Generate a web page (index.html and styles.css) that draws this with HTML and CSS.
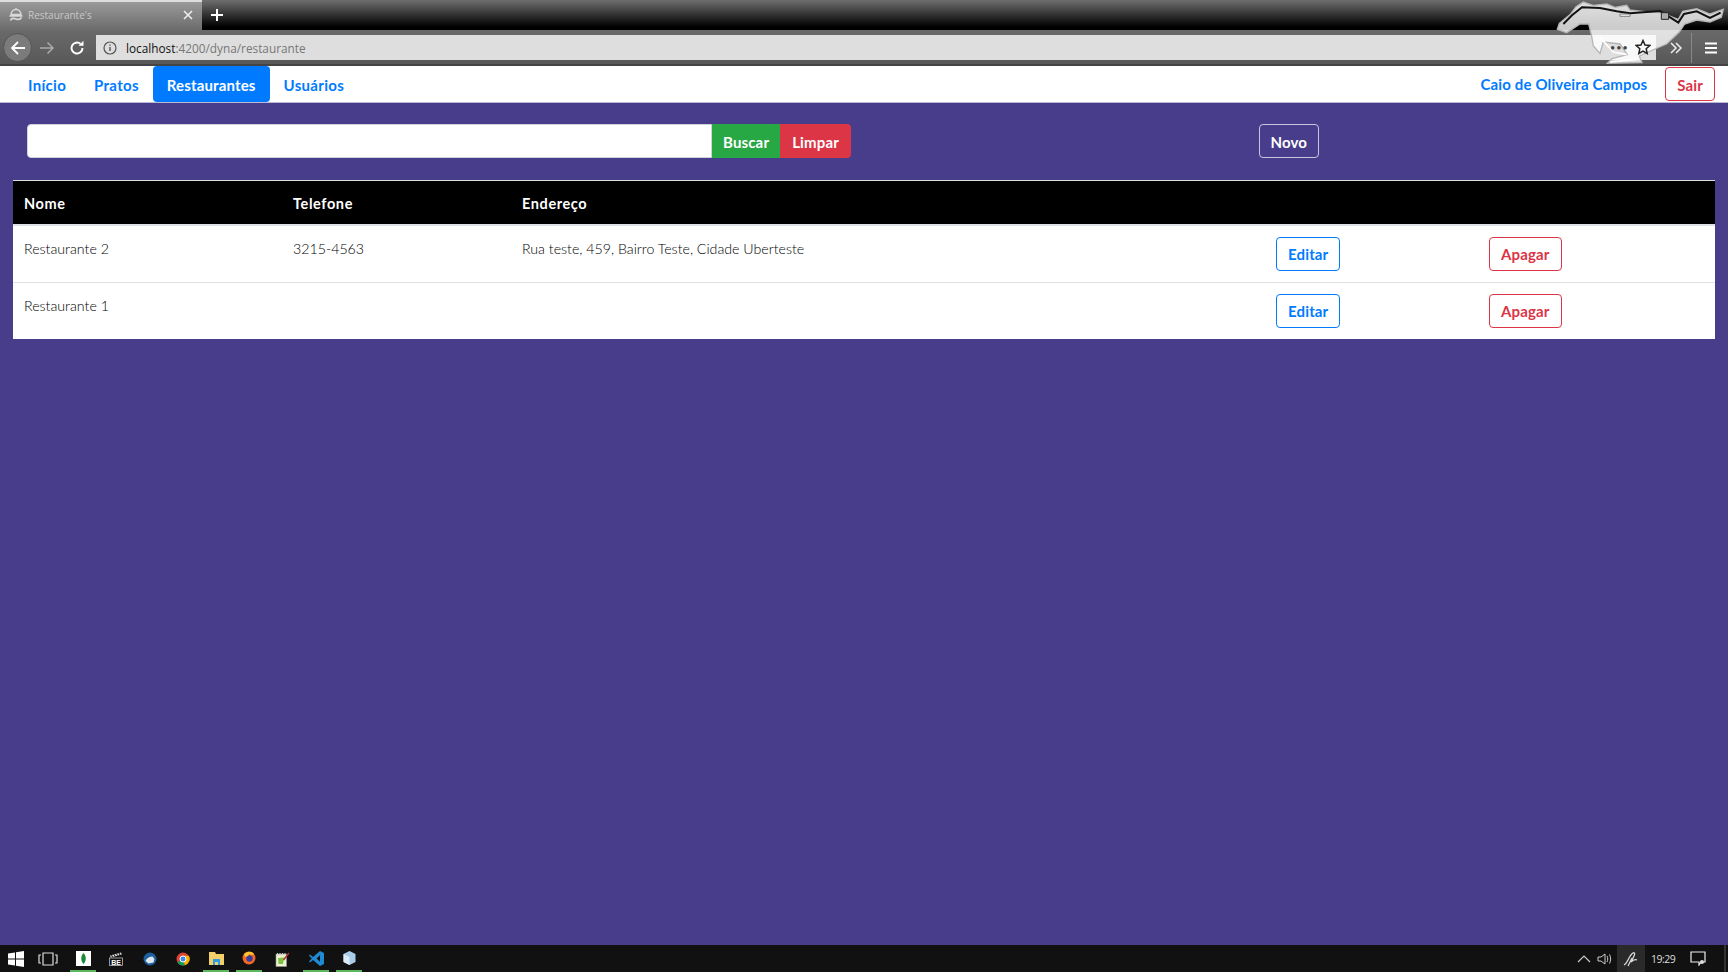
FILE: index.html
```html
<!doctype html>
<html lang="pt-BR">
<head>
<meta charset="UTF-8">
<title>Restaurante's</title>
<link rel="stylesheet" href="styles.css">
</head>
<body>
<div class="browser">
  <div class="tabstrip">
    <div class="tab">
      <svg class="tab-icon" width="16" height="16" viewBox="0 0 16 16"><path d="M8 1v1.500M3 7.500a5 5 0 0 1 10 0zM1.500 9h13" fill="none" stroke="#d8d8d8" stroke-width="1.300"/><path d="M2.500 13.500c1-2.500 3-2.500 5.500-1.500s4 1 5.500-1.500" fill="none" stroke="#d8d8d8" stroke-width="1.700"/></svg>
      <span class="tab-title">Restaurante's</span>
      <svg class="tab-close" width="12" height="12" viewBox="0 0 12 12"><path d="M2 2l8 8M10 2l-8 8" stroke="#eee" stroke-width="1.600"/></svg>
    </div>
    <svg class="new-tab" width="14" height="14" viewBox="0 0 14 14"><path d="M7 1v12M1 7h12" stroke="#fff" stroke-width="2"/></svg>
  </div>
  <div class="toolbar">
    <span class="back">
      <svg width="18" height="18" viewBox="0 0 18 18"><path d="M16 9H3M9 3L3 9l6 6" fill="none" stroke="#fff" stroke-width="1.800"/></svg>
    </span>
    <svg class="fwd" width="16" height="16" viewBox="0 0 16 16"><path d="M1 8h13M8.500 2.500L14 8l-5.500 5.500" fill="none" stroke="#aaa" stroke-width="1.500"/></svg>
    <svg class="reload" width="16" height="16" viewBox="0 0 16 16"><path d="M13.500 8A5.500 5.500 0 1 1 11.500 3.800" fill="none" stroke="#fff" stroke-width="2"/><path d="M9.500 5.800h5v-5z" fill="#fff"/></svg>
    <div class="urlbar">
      <svg width="16" height="16" viewBox="0 0 16 16"><circle cx="8" cy="8" r="6" fill="none" stroke="#555" stroke-width="1.200"/><path d="M8 7v4M8 4.500v1.300" stroke="#555" stroke-width="1.400"/></svg>
      <span class="url"><b>localhost</b>:4200/dyna/restaurante</span>
    </div>
    <svg class="more" width="14" height="14" viewBox="0 0 14 14"><path d="M2 2l5 5-5 5M7 2l5 5-5 5" fill="none" stroke="#eee" stroke-width="1.500"/></svg>
    <span class="tool-sep"></span>
    <svg class="menu" width="14" height="14" viewBox="0 0 14 14"><path d="M1 2.500h12M1 7h12M1 11.500h12" stroke="#fff" stroke-width="2"/></svg>
  </div>
  <svg class="mustang" width="178" height="68" viewBox="0 0 534 204">
    <path d="M22 88L28 70 62 42 78 20 100 6 130 16 170 12 195 22 230 16 240 30 290 36 332 38 385 58 398 34 440 26 480 42 520 28 514 52 480 66 440 60 404 72 388 96 350 132 308 150 268 168 276 188 172 190 186 176 232 164 210 132 160 126 150 160 130 138 124 104 116 72 90 72 50 98z" fill="#fff" fill-opacity=".8" stroke="#b5b5b5" stroke-width="4"/>
    <path d="M40 72L66 46 96 22 150 24 200 34 240 40 330 33 385 68 402 42 440 34 480 54 512 38" fill="none" stroke="#111" stroke-width="6"/>
    <path d="M210 42h30v7h-30z" fill="#eee" stroke="#555" stroke-width="2"/>
    <path d="M334 38h22v20h-22z" fill="#aaa" stroke="#222" stroke-width="3"/>
    <path d="M150 112l40 44 40 8M180 186l80-8" fill="none" stroke="#fff" stroke-width="5"/>
  </svg>
  <div class="url-actions">
    <span class="url-dots">•••</span>
    <svg width="16" height="16" viewBox="0 0 16 16"><path d="M8 1.500l2 4.500 4.800.5-3.600 3.200 1 4.800L8 12.100l-4.200 2.400 1-4.800L1.200 6.500 6 6z" fill="none" stroke="#222" stroke-width="1.500"/></svg>
  </div>
</div>

<nav class="navbar">
  <a class="nav-link" href="#">Início</a>
  <a class="nav-link" href="#">Pratos</a>
  <a class="nav-link active" href="#">Restaurantes</a>
  <a class="nav-link" href="#">Usuários</a>
  <span class="nav-user">Caio de Oliveira Campos</span>
  <button class="btn btn-red btn-sair">Sair</button>
</nav>

<main class="content">
  <div class="search-row">
    <input class="search-input" type="text">
    <button class="btn-fill green">Buscar</button>
    <button class="btn-fill red">Limpar</button>
    <button class="btn btn-novo">Novo</button>
  </div>
  <table class="grid">
    <thead>
      <tr><th class="c-nome">Nome</th><th class="c-tel">Telefone</th><th class="c-end">Endereço</th><th class="c-ed"></th><th></th></tr>
    </thead>
    <tbody>
      <tr>
        <td>Restaurante 2</td><td>3215-4563</td><td>Rua teste, 459, Bairro Teste, Cidade Uberteste</td>
        <td class="acao"><button class="btn btn-blue">Editar</button></td>
        <td class="acao"><button class="btn btn-red">Apagar</button></td>
      </tr>
      <tr>
        <td>Restaurante 1</td><td></td><td></td>
        <td class="acao"><button class="btn btn-blue">Editar</button></td>
        <td class="acao"><button class="btn btn-red">Apagar</button></td>
      </tr>
    </tbody>
  </table>
</main>

<footer class="taskbar">
  <svg class="win" width="16" height="16" viewBox="0 0 16 16"><path d="M0 2.500l7-1v6H0zM8 1.300l8-1.300v7.500H8zM0 8.500h7v6l-7-1zM8 8.500h8V16l-8-1.300z" fill="#fff"/></svg>
  <svg class="task-view" width="20" height="14" viewBox="0 0 20 14"><path d="M5 1h10v12H5zM3 3H1v8h2M17 3h2v8h-2" fill="none" stroke="#ddd" stroke-width="1.200"/></svg>
  <span class="task first on"><svg width="15" height="15" viewBox="0 0 15 15"><rect width="15" height="15" fill="#fff"/><path d="M7.500 2c3 3 3 8 0 11-3-3-3-8 0-11z" fill="#1d8a3a"/></svg></span>
  <span class="task"><svg width="14" height="14" viewBox="0 0 14 14"><path d="M1 3.500l11-3 .8 2-11 3z" fill="#ddd"/><path d="M2.500 3l1 2M5 2.300l1 2M7.500 1.600l1 2M10 1l1 2" stroke="#111"/><rect x=".5" y="6" width="13" height="7.500" fill="#111" stroke="#bbb" stroke-width=".8"/><text x="7" y="12.500" class="be">BE</text></svg></span>
  <span class="task"><svg width="14" height="14" viewBox="0 0 14 14"><circle cx="7" cy="7" r="6.500" fill="#1c5f9c"/><path d="M2.500 9c1-3 4-4.500 7-4.500l2 2.500-1 3.500-5 1z" fill="#dde6ee"/></svg></span>
  <span class="task"><svg width="14" height="14" viewBox="0 0 14 14"><circle cx="7" cy="7" r="6.500" fill="#db4437"/><path d="M7 7L1.400 10.300A6.500 6.500 0 0 0 9 13.200z" fill="#0f9d58"/><path d="M7 3.700h5.800A6.500 6.500 0 0 1 9 13.200L7 7z" fill="#f4b400"/><circle cx="7" cy="7" r="3" fill="#4285f4" stroke="#fff"/></svg></span>
  <span class="task on"><svg width="15" height="13" viewBox="0 0 15 13"><path d="M0 0h6l1 2h8v11H0z" fill="#f2cf6b"/><rect x="4" y="7" width="7" height="6" fill="#2f9be0"/><rect x="6" y="10" width="3" height="3" fill="#f2cf6b"/></svg></span>
  <span class="task on"><svg width="14" height="14" viewBox="0 0 14 14"><circle cx="7" cy="7" r="6.500" fill="#f26b21"/><circle cx="7.500" cy="7.500" r="3.200" fill="#3c3a9e"/><path d="M2 3c3-3 8-3 10 0l-2 1-3-1-1 2-3 1z" fill="#ffc52e"/></svg></span>
  <span class="task"><svg width="15" height="15" viewBox="0 0 15 15"><path d="M1 2h10.500v12.500H1z" fill="#eef2d0" stroke="#999" stroke-width=".6"/><path d="M3 6l6-.5-1 6.500H3.500z" fill="#7ec242"/><path d="M2.500 1v2.500M5 1v2.500M7.500 1v2.500M10 1v2.500" stroke="#ccc"/><path d="M14 1L8.500 8" stroke="#a33" stroke-width="1.500"/></svg></span>
  <span class="task on"><svg width="15" height="15" viewBox="0 0 15 15"><path d="M11 0l4 2v11l-4 2-7-6-3 2.400L0 10.500 2.800 7.500 0 4.500l1-.9L4 6zM11 4.200L7.500 7.500 11 10.800z" fill="#1f8ad2"/></svg></span>
  <span class="task on"><svg width="13" height="14" viewBox="0 0 13 14"><path d="M6.500 0l6 3v8l-6 3-6-3V3z" fill="#a8cdea"/><path d="M6.500 6v8l-6-3V3z" fill="#dcebf7"/></svg></span>
  <span class="tray">
    <svg class="tray-up" width="14" height="8" viewBox="0 0 14 8"><path d="M1 7l6-6 6 6" fill="none" stroke="#ccc" stroke-width="1.200"/></svg>
    <svg class="tray-vol" width="16" height="14" viewBox="0 0 16 14"><path d="M1 5h3l4-3v10l-4-3H1zM10 4c1 2 1 4 0 6M12.500 2.500c1.500 3 1.500 6 0 9" fill="none" stroke="#ccc"/></svg>
    <span class="tray-pen"><svg width="16" height="18" viewBox="0 0 16 18"><path d="M1 15c2-1 3-3 4-5s3-6 5-7 2 1 1 3l-3 6c2-2 4-3 6-2" fill="none" stroke="#ddd" stroke-width="1.300"/><path d="M5 16l4-8" stroke="#ddd" stroke-width="1.300"/></svg></span>
    <span class="clock">19:29</span>
    <svg class="notif" width="16" height="15" viewBox="0 0 16 15"><path d="M1 1h14v10h-4l-2 3v-3H1z" fill="none" stroke="#eee" stroke-width="1.200"/><circle cx="12" cy="11" r="2" fill="#ddd"/></svg>
    <span class="show-desk"></span>
  </span>
</footer>
</body>
</html>
```
FILE: styles.css
```css
html, body {
  height: 100%;
}
body {
  margin: 0;
  height: 972px;
  display: flex;
  flex-direction: column;
  background-color: #483d8b;
  font-family: Lato, "Liberation Sans", sans-serif;
  overflow: hidden;
}

/* barra do navegador */
.browser {
  position: relative;
  height: 66px;
  flex: none;
  background-color: #555;
}
.tabstrip {
  height: 30px;
  display: flex;
  align-items: center;
  background: linear-gradient(#6e6e6e, #000 90%);
}
.tab {
  width: 202px;
  height: 30px;
  box-sizing: border-box;
  display: flex;
  align-items: center;
  padding: 0 8px 2px;
  border-top: 2px solid #ddd;
  background: linear-gradient(#9a9a9a, #6c6c6c);
}
.tab-title {
  margin-left: 4px;
  flex: 1;
  font: 10px "Open Sans", sans-serif;
  color: #c8c8c8;
}
.new-tab {
  margin-left: 8px;
}
.toolbar {
  height: 36px;
  box-sizing: border-box;
  display: flex;
  align-items: center;
  padding: 1px 0 0 3px;
  background: linear-gradient(#6a6a6a, #585858);
  border-bottom: 2px solid #444;
}
.back {
  width: 29px;
  height: 29px;
  border-radius: 50%;
  background: #7b7b7b;
  border: 1px solid #555;
  box-sizing: border-box;
  display: flex;
  align-items: center;
  justify-content: center;
}
.fwd {
  margin-left: 7px;
}
.reload {
  margin-left: 14px;
}
.urlbar {
  width: 1560px;
  height: 25px;
  margin-left: 11px;
  box-sizing: border-box;
  padding: 0 4px 0 6px;
  display: flex;
  align-items: center;
  background: #dedede;
}
.url {
  flex: 1;
  margin-left: 8px;
  font: 11.8px "Open Sans", sans-serif;
  color: #777;
}
.url b {
  font-weight: 400;
  color: #111;
}
.url-actions {
  position: absolute;
  top: 37px;
  left: 1610px;
  height: 20px;
  display: flex;
  align-items: center;
}
.url-dots {
  font-size: 9px;
  letter-spacing: 1px;
  color: #444;
  margin-right: 6px;
}
.more {
  margin-left: 13px;
}
.tool-sep {
  width: 1px;
  height: 30px;
  margin-left: 8px;
  background: #888;
}
.menu {
  margin-left: 12px;
}
.mustang {
  position: absolute;
  top: 0;
  right: 0;
}

/* menu */
.navbar {
  flex: none;
  height: 36px;
  display: flex;
  align-items: center;
  padding-left: 14px;
  padding-right: 13px;
  background: #fff;
  border-bottom: 1px solid #bdb8d6;
  font-size: 15px;
  font-weight: 700;
  letter-spacing: .15px;
}
.nav-link {
  height: 36px;
  box-sizing: border-box;
  line-height: 34px;
  padding: 2px 14px 0;
  border-radius: 4px;
  color: #007bff;
  text-decoration: none;
  letter-spacing: .3px;
}
.nav-link.active {
  color: #fff;
  background: #007bff;
  letter-spacing: .15px;
}
.nav-user {
  margin-left: auto;
  color: #007bff;
  margin-right: 18px;
}

/* botoes */
.btn {
  height: 34px;
  padding: 1px 11px 0;
  background: transparent;
  border: 1px solid;
  border-radius: 4px;
  font-family: inherit;
  font-size: 15px;
  font-weight: 700;
  letter-spacing: .15px;
}
.btn-blue {
  color: #007bff;
  border-color: #007bff;
}
.btn-red {
  color: #dc3545;
  border-color: #dc3545;
}
.btn-novo {
  color: #fff;
  border-color: #c9c5de;
  margin-left: 408px;
  padding: 1px 10.500px 0;
}
.btn-fill {
  height: 34px;
  padding: 1px 11px 0;
  border: 0;
  color: #fff;
  font-family: inherit;
  font-size: 15px;
  font-weight: 700;
  letter-spacing: .15px;
}
.green {
  background: #28a745;
}
.red {
  padding: 1px 12px 0;
  background: #dc3545;
  border-radius: 0 4px 4px 0;
}

/* busca */
.content {
  flex: 1;
  padding: 21px 13px 0;
}
.search-row {
  display: flex;
  align-items: flex-start;
  padding-left: 14px;
  height: 36px;
}
.search-input {
  width: 685px;
  height: 34px;
  box-sizing: border-box;
  border: 1px solid #ced4da;
  border-radius: 4px 0 0 4px;
  background: #fff;
}

/* tabela */
.grid {
  width: 1702px;
  margin-top: 20px;
  border-collapse: collapse;
  background: #fff;
  font-size: 14.2px;
  font-weight: 300;
  color: #000;
  table-layout: fixed;
}
.grid th {
  height: 44px;
  padding: 2px 10px 0 11px;
  box-sizing: border-box;
  text-align: left;
  background: #000;
  color: #fff;
  font-size: 14.5px;
  font-weight: 700;
  letter-spacing: .6px;
  border-top: 1px solid #ddd;
  border-bottom: 2px solid #dee2e6;
}
.c-nome {
  width: 269px;
}
.c-tel {
  width: 229px;
}
.c-end {
  width: 754px;
}
.c-ed {
  width: 213px;
}
.grid td {
  padding: 14px 10px 11px 11px;
  vertical-align: top;
  border-top: 1px solid #dee2e6;
}
.grid td.acao {
  padding-top: 11px;
}
.grid td .btn {
  display: block;
}

/* barra de tarefas */
.taskbar {
  flex: none;
  height: 27px;
  display: flex;
  align-items: center;
  background: #111;
}
.win {
  margin-left: 8px;
}
.task-view {
  margin-left: 14px;
}
.task {
  width: 26px;
  height: 27px;
  box-sizing: border-box;
  margin-left: 7.300px;
  padding-top: 1px;
  display: flex;
  align-items: center;
  justify-content: center;
}
.task.first {
  margin-left: 12px;
}
.task.on {
  border-bottom: 2px solid #5cb85c;
}
.be {
  font: 700 7px "Liberation Sans", sans-serif;
  fill: #fff;
  text-anchor: middle;
}
.tray {
  margin-left: auto;
  display: flex;
  align-items: center;
  height: 27px;
}
.tray-vol {
  margin-left: 6px;
}
.tray-pen {
  width: 28px;
  height: 27px;
  margin-left: 4px;
  background: #2a2a2a;
  display: flex;
  align-items: center;
  justify-content: center;
}
.clock {
  width: 24px;
  margin-left: 6px;
  font: 10.5px "Open Sans", sans-serif;
  letter-spacing: -.5px;
  color: #ddd;
}
.notif {
  margin-left: 15px;
}
.show-desk {
  width: 2px;
  height: 27px;
  margin: 0 2px 0 18px;
  background: #333;
}
```
